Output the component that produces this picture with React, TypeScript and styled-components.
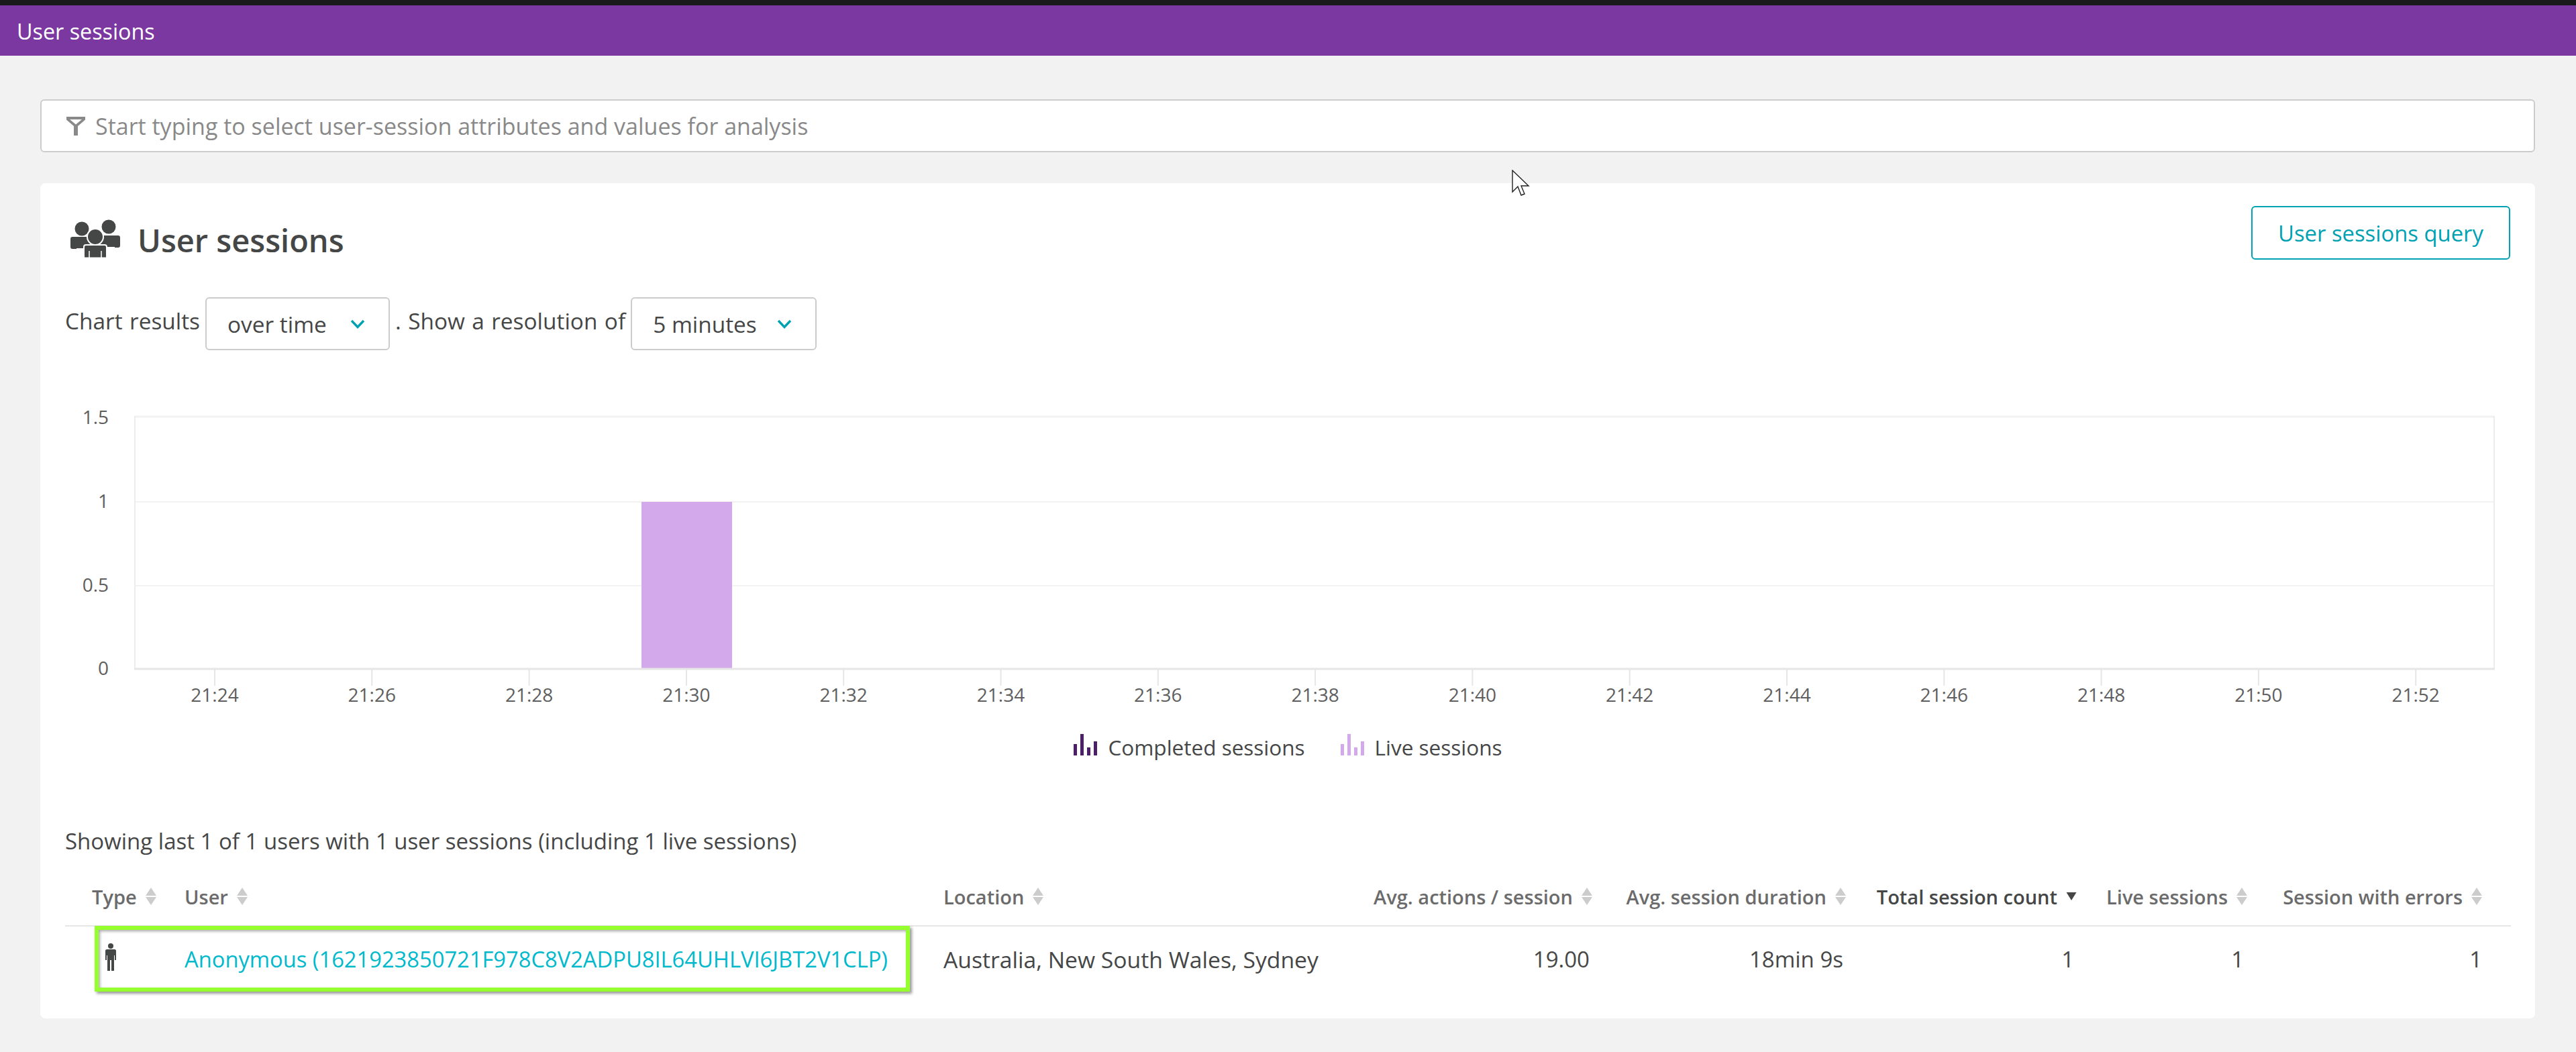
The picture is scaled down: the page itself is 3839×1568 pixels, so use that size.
import React from 'react';
import styled, { createGlobalStyle } from 'styled-components';

const GlobalStyle = createGlobalStyle`
  html, body {
    margin: 0;
    padding: 0;
    background: #f2f2f2;
  }
  body {
    font-family: "Open Sans", "Noto Sans", sans-serif;
    color: #454646;
  }
`;

const Page = styled.div`
  position: relative;
  width: 3839px;
  height: 1568px;
  overflow: hidden;
  background: #f2f2f2;
`;

const TitleBar = styled.header`
  height: 75px;
  border-top: 8px solid #1a1a1a;
  background: #7c38a1;
  color: #fff;
  display: flex;
  align-items: center;
  padding-left: 25px;
  font-size: 32.3px;
`;

const Main = styled.main`
  padding: 65px 61px 0 60px;
`;

const FilterBar = styled.div`
  height: 79px;
  box-sizing: border-box;
  background: #fff;
  border: 2px solid #ccc;
  border-radius: 6px;
  display: flex;
  align-items: center;
  padding-left: 36px;
  gap: 14px;
  color: #898989;
  font-size: 34px;
`;

const Card = styled.section`
  margin-top: 46px;
  height: 1245px;
  box-sizing: border-box;
  background: #fff;
  border-radius: 8px;
  padding: 34px 36px 0 37px;
`;

const CardHead = styled.div`
  display: flex;
  justify-content: space-between;
  align-items: flex-start;
`;

const Heading = styled.h1`
  margin: 20px 0 0 8px;
  display: flex;
  align-items: flex-start;
  gap: 25px;
  font-size: 47px;
  line-height: 60px;
  font-weight: 600;
  color: #454646;
`;

const HeadingText = styled.span`
  margin-top: 1px;
`;

const QueryButton = styled.button`
  width: 386px;
  height: 80px;
  margin-right: 1px;
  box-sizing: border-box;
  background: #fff;
  border: 2px solid #00a1b2;
  border-radius: 6px;
  color: #00a1b2;
  font: inherit;
  font-size: 32.8px;
`;

const Controls = styled.div`
  margin-top: 55px;
  display: flex;
  align-items: center;
  gap: 8px;
  font-size: 33.4px;
`;

const ControlLabel = styled.span`
  margin-bottom: 10px;
  word-spacing: 1.7px;
`;

const Select = styled.div<{ $width: number }>`
  width: ${({ $width }) => $width}px;
  height: 79px;
  box-sizing: border-box;
  border: 2px solid #ccc;
  border-radius: 6px;
  display: flex;
  align-items: center;
  justify-content: space-between;
  padding: 0 35px 0 31px;
`;

const ChartFrame = styled.svg`
  display: block;
  margin: 78px 0 0 -37px;
`;

const AxisText = styled.text`
  font-size: 28px;
  fill: #5e5e5e;
`;

const Legend = styled.div`
  margin-top: 34px;
  display: flex;
  justify-content: center;
  gap: 53px;
  font-size: 31.5px;
  line-height: 40px;
`;

const LegendItem = styled.div`
  display: flex;
  align-items: center;
  gap: 16px;

  svg {
    margin-bottom: 8px;
  }
`;

const Summary = styled.div`
  margin-top: 100px;
  font-size: 33px;
  line-height: 40px;
`;

const Table = styled.div`
  position: relative;
  margin-top: 25px;
`;

const Columns = styled.div`
  display: grid;
  grid-template-columns: 178px 1131px 595px 372px 378px 344px 254px 350px 44px;
`;

const HeaderRow = styled(Columns)`
  height: 74px;
  padding-bottom: 6px;
  align-items: center;
  border-bottom: 2px solid #e6e6e6;
  font-size: 29px;
  font-weight: 600;
  color: #6b6b6b;
`;

const HeaderCell = styled.div<{ $right?: boolean; $inset?: number; $active?: boolean }>`
  display: flex;
  align-items: center;
  gap: 13px;
  justify-content: ${({ $right }) => ($right ? 'flex-end' : 'flex-start')};
  padding-left: ${({ $inset }) => $inset ?? 0}px;
  white-space: nowrap;
  color: ${({ $active }) => ($active ? '#454646' : 'inherit')};
`;

const BodyRow = styled(Columns)`
  height: 97px;
  padding-bottom: 2px;
  align-items: center;
  font-size: 33px;
`;

const BodyCell = styled.div<{ $right?: boolean; $pad?: number }>`
  text-align: ${({ $right }) => ($right ? 'right' : 'left')};
  padding-right: ${({ $pad }) => $pad ?? 0}px;
  white-space: nowrap;
`;

const LinkCell = styled(BodyCell)`
  font-size: 32.7px;
`;

const LocationCell = styled(BodyCell)`
  font-size: 33.7px;
`;

const TypeCell = styled.div`
  padding: 0 0 6px 60px;
  display: flex;
`;

const UserLink = styled.a`
  color: #00b9cc;
  text-decoration: none;
`;

const Highlight = styled.div`
  position: absolute;
  top: 81px;
  left: 44px;
  width: 1215px;
  height: 98px;
  box-sizing: border-box;
  border: 6px solid #96ff2e;
  box-shadow: 3px 3px 4px rgba(0, 0, 0, 0.4), inset 2px 2px 4px rgba(0, 0, 0, 0.35);
  pointer-events: none;
`;

const Cursor = styled.svg`
  position: absolute;
  left: 2253px;
  top: 253px;
`;

const Hours = Array.from({ length: 15 }, (_, i) => 24 + i * 2);

const FunnelIcon = () => (
  <svg width="30" height="30" viewBox="0 0 30 30">
    <path d="M1 1H29V5.5L18 15V29H12V15L1 5.5Z" fill="#898989" />
    <path d="M6 5H24L15 12.5Z" fill="#fff" />
  </svg>
);

const Chevron = () => (
  <svg width="22" height="14" viewBox="0 0 22 14">
    <path d="M2 2L11 11.5L20 2" fill="none" stroke="#00a1b2" strokeWidth="3.4" />
  </svg>
);

const PeopleIcon = () => (
  <svg width="75" height="58" viewBox="0 0 75 58">
    <circle cx="17" cy="14" r="10.5" fill="#454646" />
    <circle cx="57" cy="11" r="10.5" fill="#454646" />
    <path d="M3 26H31V44H25V43H9V44H3C1 44 0 43 0 41V29C0 27 1 26 3 26Z" fill="#454646" />
    <path d="M44 24H71C73 24 74 25 74 27V39C74 41 73 42 71 42H66V41H50V42H44Z" fill="#454646" />
    <circle cx="37" cy="26" r="12" fill="#454646" stroke="#fff" strokeWidth="2" />
    <path d="M23 38H51C53 38 54 39 54 41V56C54 57 53 57.5 52 57.5H22C21 57.5 20 57 20 56V41C20 39 21 38 23 38Z" fill="#454646" stroke="#fff" strokeWidth="2" />
    <path d="M28 47V57M46 47V57" stroke="#fff" strokeWidth="1.5" />
  </svg>
);

const PersonIcon = () => (
  <svg width="16" height="42" viewBox="0 0 16 42">
    <circle cx="8" cy="4" r="4" fill="#454646" />
    <path d="M2 9H14C15 9 16 10 16 11V25H14V18H13V41H9V25H7V41H3V18H2V25H0V11C0 10 1 9 2 9Z" fill="#454646" />
  </svg>
);

const SortIcon = () => (
  <svg width="16" height="26" viewBox="0 0 16 26">
    <path d="M8 0L16 12H0Z" fill="#ccc" />
    <path d="M8 26L16 14H0Z" fill="#ccc" />
  </svg>
);

const SortedIcon = () => (
  <svg width="16" height="12" viewBox="0 0 16 12">
    <path d="M8 12L15.5 0H0.5Z" fill="#454646" />
  </svg>
);

const BarsIcon = ({ color, width }: { color: string; width: number }) => (
  <svg width={width} height="32" viewBox="0 0 35 32">
    <rect x="0" y="15" width="5" height="17" fill={color} />
    <rect x="10" y="0" width="5" height="32" fill={color} />
    <rect x="20" y="20" width="5" height="12" fill={color} />
    <rect x="30" y="11" width="5" height="21" fill={color} />
  </svg>
);

const SessionsChart = () => (
  <ChartFrame width="3718" height="460" viewBox="60 600 3718 460">
    <line x1="200" x2="3717" y1="621" y2="621" stroke="#f2f2f2" strokeWidth="3" />
    <line x1="200" x2="3717" y1="748" y2="748" stroke="#f2f2f2" strokeWidth="2" />
    <line x1="200" x2="3717" y1="873" y2="873" stroke="#f2f2f2" strokeWidth="2" />
    <line x1="201" x2="201" y1="620" y2="997" stroke="#ececec" strokeWidth="2" />
    <line x1="3717" x2="3717" y1="620" y2="997" stroke="#ececec" strokeWidth="2" />
    <rect x="956" y="748" width="135" height="249" fill="#d3a9ec" />
    <line x1="200" x2="3718" y1="997" y2="997" stroke="#e6e6e6" strokeWidth="3" />
    {[
      ['1.5', 621],
      ['1', 746],
      ['0.5', 871],
      ['0', 995],
    ].map(([label, y]) => (
      <AxisText key={label} x="162" y={y} textAnchor="end" dominantBaseline="central">
        {label}
      </AxisText>
    ))}
    {Hours.map((hour, i) => {
      const x = 320 + i * 234.3;
      return (
        <g key={hour}>
          <line x1={x} x2={x} y1="998" y2="1022" stroke="#e6e6e6" strokeWidth="2" />
          <AxisText x={x} y="1035" textAnchor="middle" dominantBaseline="central">
            {`21:${hour}`}
          </AxisText>
        </g>
      );
    })}
  </ChartFrame>
);

const columns = [
  { label: 'Avg. actions / session', value: '19.00', pad: 4 },
  { label: 'Avg. session duration', value: '18min 9s', pad: 4 },
  { label: 'Total session count', value: '1', pad: 4, active: true },
  { label: 'Live sessions', value: '1', pad: 5 },
  { label: 'Session with errors', value: '1', pad: 0 },
];

export default function App() {
  return (
    <Page>
      <GlobalStyle />
      <TitleBar>User sessions</TitleBar>
      <Main>
        <FilterBar>
          <FunnelIcon />
          Start typing to select user-session attributes and values for analysis
        </FilterBar>
        <Card>
          <CardHead>
            <Heading>
              <PeopleIcon />
              <HeadingText>User sessions</HeadingText>
            </Heading>
            <QueryButton>User sessions query</QueryButton>
          </CardHead>
          <Controls>
            <ControlLabel>Chart results</ControlLabel>
            <Select $width={275}>
              over time
              <Chevron />
            </Select>
            <ControlLabel>. Show a resolution of</ControlLabel>
            <Select $width={277}>
              5 minutes
              <Chevron />
            </Select>
          </Controls>
          <SessionsChart />
          <Legend>
            <LegendItem>
              <BarsIcon color="#4b2069" width={35} />
              Completed sessions
            </LegendItem>
            <LegendItem>
              <BarsIcon color="#d3a9ec" width={35} />
              Live sessions
            </LegendItem>
          </Legend>
          <Summary>Showing last 1 of 1 users with 1 user sessions (including 1 live sessions)</Summary>
          <Table>
            <HeaderRow>
              <HeaderCell $inset={40}>
                Type
                <SortIcon />
              </HeaderCell>
              <HeaderCell>
                User
                <SortIcon />
              </HeaderCell>
              <HeaderCell>
                Location
                <SortIcon />
              </HeaderCell>
              {columns.map((column) => (
                <HeaderCell key={column.label} $right $active={column.active}>
                  {column.label}
                  {column.active ? <SortedIcon /> : <SortIcon />}
                </HeaderCell>
              ))}
            </HeaderRow>
            <BodyRow>
              <TypeCell>
                <PersonIcon />
              </TypeCell>
              <LinkCell>
                <UserLink href="#">Anonymous (1621923850721F978C8V2ADPU8IL64UHLVI6JBT2V1CLP)</UserLink>
              </LinkCell>
              <LocationCell>Australia, New South Wales, Sydney</LocationCell>
              {columns.map((column) => (
                <BodyCell key={column.label} $right $pad={column.pad}>
                  {column.value}
                </BodyCell>
              ))}
            </BodyRow>
            <Highlight />
          </Table>
        </Card>
      </Main>
      <Cursor width="28" height="40" viewBox="0 0 28 40">
        <path d="M1 1V33L9 25L14 38L19 36L14 24H25Z" fill="#fff" stroke="#222" strokeWidth="1.4" />
      </Cursor>
    </Page>
  );
}
